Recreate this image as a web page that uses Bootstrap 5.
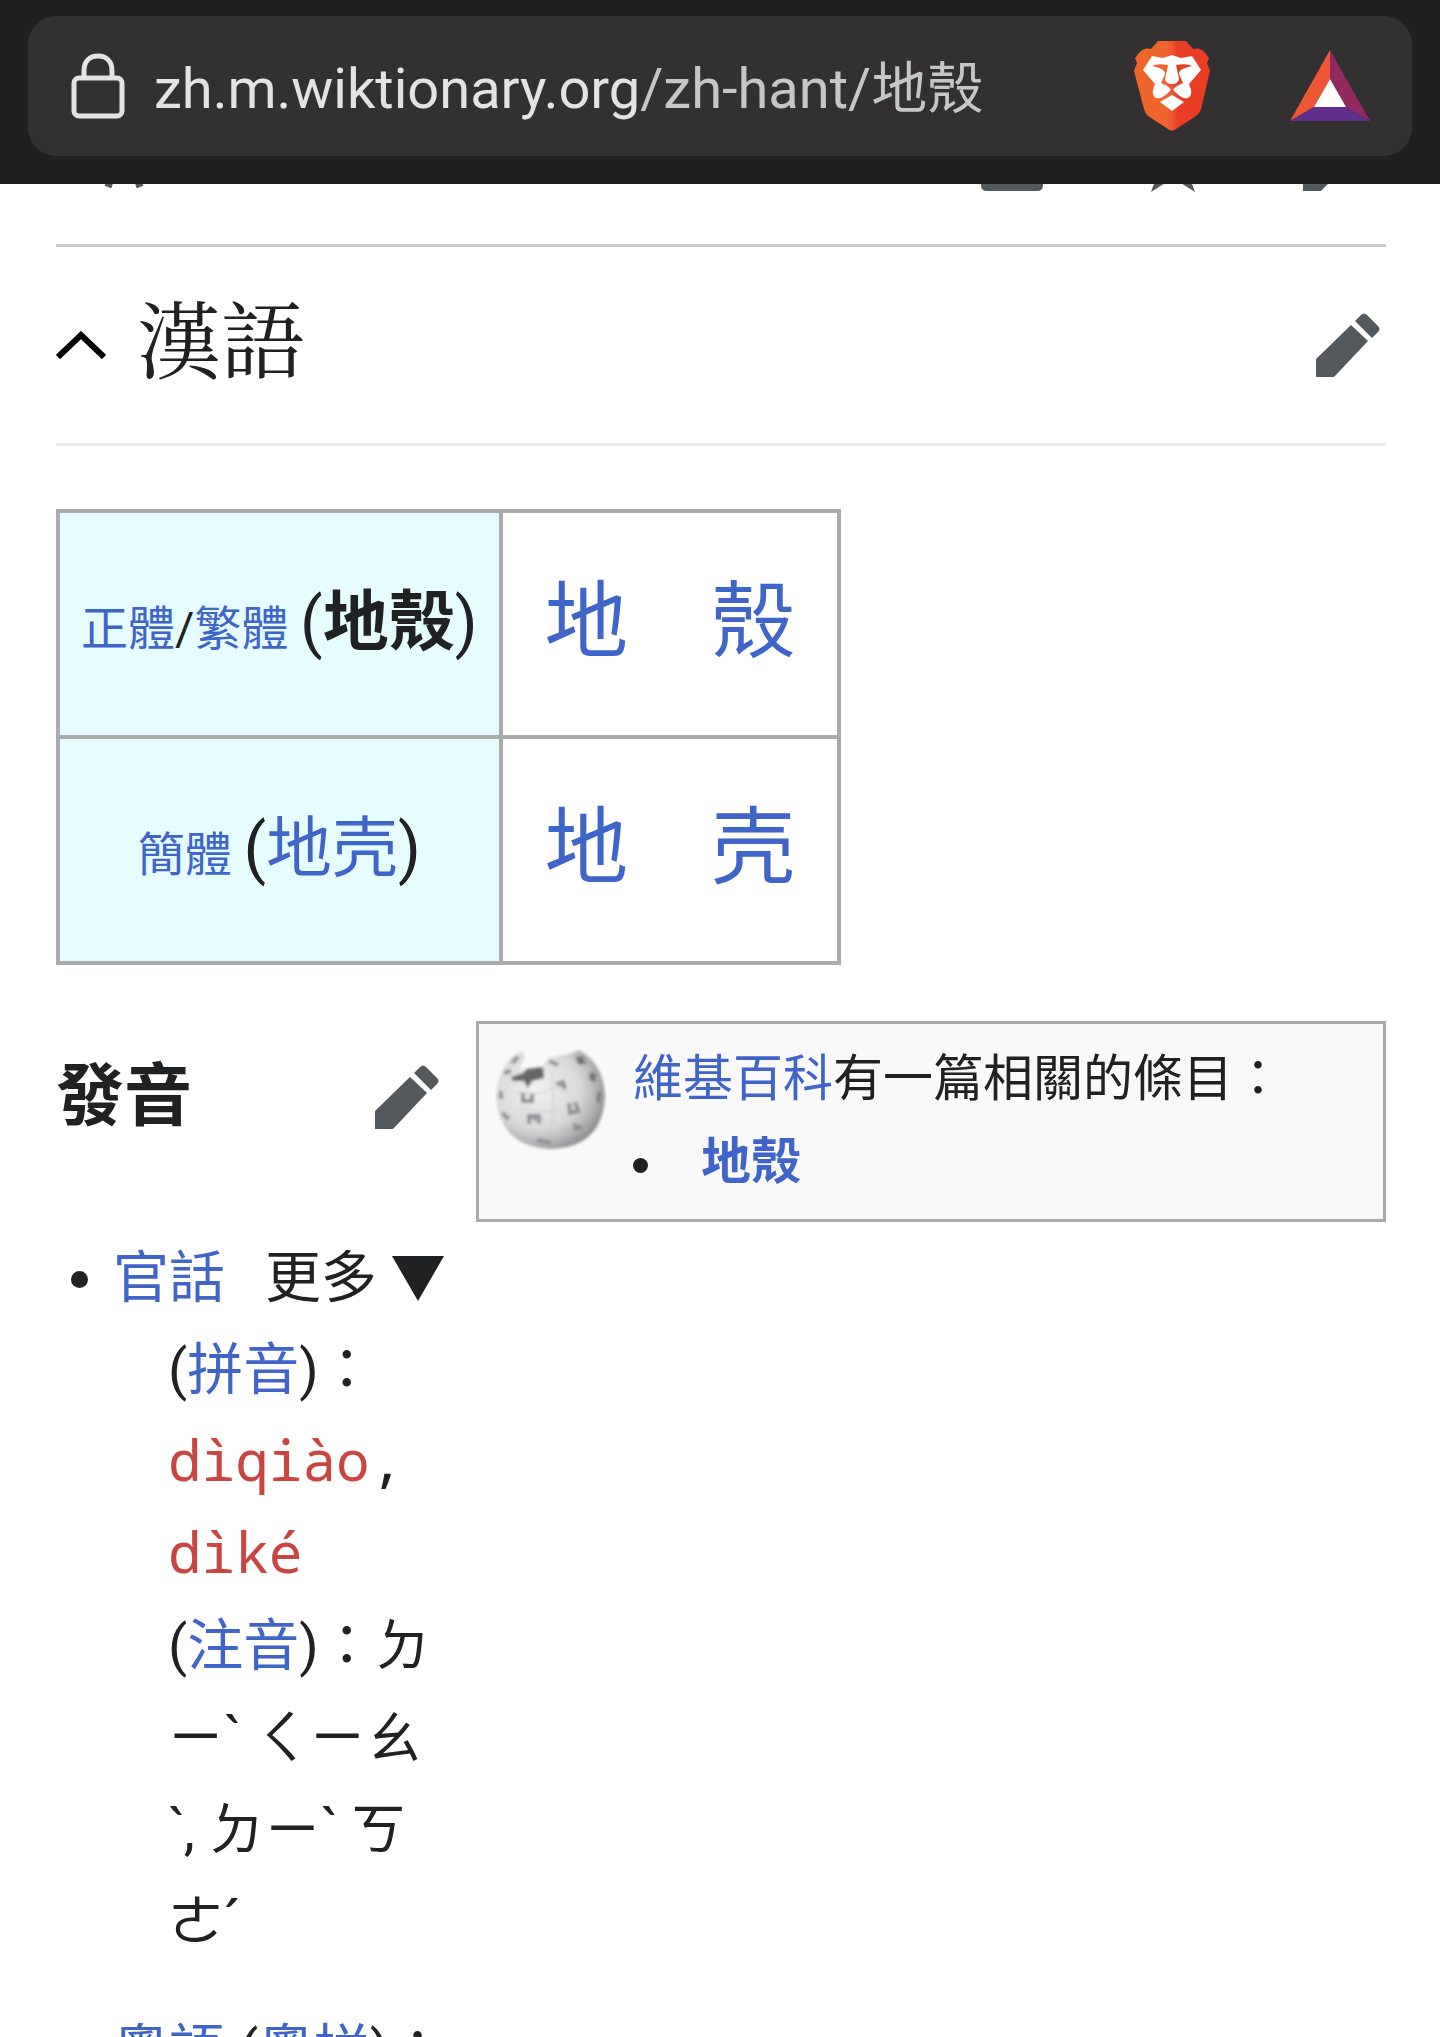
<!DOCTYPE html>
<html lang="zh-Hant">
<head>
<meta charset="utf-8">
<meta name="viewport" content="width=device-width, initial-scale=1">
<title>地殼</title>
<link href="https://cdn.jsdelivr.net/npm/bootstrap@5.3.0/dist/css/bootstrap.min.css" rel="stylesheet">
<style>
  body { font-family: Roboto, "Noto Sans", "Noto Sans CJK TC", sans-serif; font-size: 56px; line-height: 92px; color: #202122; background: #fff; }
  .screen { height: 100vh; }
  a { color: #4065c9; text-decoration: none; }
  .gutter { padding-left: 56px; padding-right: 54px; }
  .browser-bar { background: #202020; padding: 16px 28px 28px; z-index: 2; }
  .omnibox { background: #323031; border-radius: 28px; height: 140px; padding: 0 42px 0 43px; line-height: 64px; color: #c4c7c5; }
  .omnibox .host { color: #e3e3e3; }
  .omnibox .address { padding: 5px 0 0 29px; }
  .omnibox .shields { margin-right: 80px; }
  .plain-btn { background: none; border: 0; padding: 0; display: block; line-height: 0; color: #54595d; }
  .page-tools { height: 64px; margin-top: -56px; padding-left: 83px; padding-right: 73px; color: #54595d; }
  .tool-set { gap: 98px; }
  .rule-strong { border-bottom: 3px solid #c8ccd1; height: 55px; }
  .lang-heading { height: 199px; padding: 0 6px 0 0; border-bottom: 3px solid #eaecf0; }
  .lang-heading h2 { font-family: "Noto Serif CJK TC", "Noto Serif CJK JP", "Noto Serif CJK SC", "Liberation Serif", serif; font-size: 84px; line-height: 120px; font-weight: 400; margin: 0 0 18px 31px; }
  .forms { margin: 63px 0 56px; border-collapse: collapse; border: 4px solid #aaa; }
  .forms th, .forms td { border-top: 4px solid #aaa; border-bottom: 4px solid #aaa; height: 226px; text-align: center; vertical-align: middle; padding: 0; }
  .forms th { background: #e5fdff; border-right: 4px solid #aaa; padding: 4px 21px 0; font-weight: 400; font-size: 66px; line-height: 110px; white-space: nowrap; }
  .forms th .script { font-size: 47px; }
  .forms td { font-size: 84px; line-height: 138px; width: 169px; padding-bottom: 2px; }
  .sound-col { flex: 0 0 420px; white-space: nowrap; }
  .sub-heading { height: 180px; padding: 0 37px 29px 0; }
  .sub-heading h3 { font-size: 68px; line-height: 92px; font-weight: 700; margin: 0; }
  .dots { list-style: none; margin: 0; padding: 0; }
  .dots > li { position: relative; }
  .dots > li::before { content: ""; position: absolute; border-radius: 50%; background: #202122; }
  .readings { margin-top: 31px; padding-left: 57px; }
  .readings > li { margin-bottom: 37px; }
  .readings > li::before { width: 17px; height: 17px; left: -42px; top: 39px; }
  .readings .detail { padding-left: 55px; }
  .more-btn { font: inherit; line-height: inherit; color: inherit; background: none; border: 0; padding: 0; margin-left: 40px; gap: 15px; }
  .pinyin { font-family: "Noto Sans Mono", "DejaVu Sans Mono", monospace; line-height: 1; }
  .pinyin a { color: #cb4540; }
  .sister { flex: 1 1 0; border: 3px solid #aaa; background: #f9f9f9; height: 201px; padding: 14px 16px 10px; font-size: 50px; line-height: 83px; gap: 26px; }
  .sister .dots > li { padding-left: 68px; font-weight: 700; }
  .sister .dots > li::before { width: 15px; height: 15px; left: 0; top: 37px; }
  .globe { margin-top: 11px; }
</style>
</head>
<body>
<div class="screen overflow-hidden">
  <header class="browser-bar position-relative">
    <div class="omnibox d-flex align-items-center">
      <svg width="54" height="66" viewBox="0 0 54 66" class="flex-shrink-0" fill="none" stroke="#e3e3e3" stroke-width="5" aria-hidden="true"><rect x="3" y="25" width="48" height="38" rx="5"/><path d="M13 25V18C13 8 19 3 27 3s14 5 14 15v7"/></svg>
      <div class="address flex-grow-1 text-nowrap"><span class="host">zh.m.wiktionary.org</span>/zh-hant/地殼</div>
      <button class="plain-btn shields" aria-label="Shields">
        <svg width="76" height="90" viewBox="0 0 76 90"><defs><linearGradient id="mane"><stop offset=".42" stop-color="#f0652b"/><stop offset=".5" stop-color="#ef5636"/><stop offset=".57" stop-color="#ea3d26"/></linearGradient></defs>
        <path fill="url(#mane)" d="M24 0H52L59 8Q67 6 71 12L75 17 73 22 76 30 67 68Q66 72 62 75L42 88Q38 91 34 88L14 75Q11 72 10 68L0 30 3 22 1 17 5 12Q10 6 17 8Z"/>
        <path fill="#fff" d="M18 15L29 17 38 14 47 17 58 15 67 29 55 43Q60 54 54 57 49 59 40 50Q38 48 43 45L49 42 45 33Q44 28 58 25 53 22 42 24L45 38Q44 43 38 43T31 38L34 24Q23 22 18 25 32 28 31 33L27 42 33 45Q38 48 36 50 27 59 22 57 16 54 21 43L9 29Z"/>
        <path fill="#fff" d="M38 54L50 61 38 70 26 61Z"/></svg>
      </button>
      <button class="plain-btn" aria-label="Rewards">
        <svg width="80" height="72" viewBox="0 0 80 72"><path fill="#ed5736" d="M40 0V29L24 57 0 71Z"/><path fill="#902a61" d="M40 0L80 71 56 57 40 29Z"/><path fill="#602f8c" d="M0 71L24 57H56L80 71Z"/><path fill="#fff" d="M40 29L56 57H24Z"/></svg>
      </button>
    </div>
  </header>

  <nav class="page-tools d-flex justify-content-between align-items-end" aria-label="頁面工具">
    <button class="plain-btn" aria-label="語言"><svg width="64" height="64" viewBox="0 0 64 64" fill="none" stroke="currentColor" stroke-width="7"><path d="M25 59L41 14 57 59M31 38H51M2 10H38M20 2V10M6 38Q26 28 31 10M10 12Q14 24 24 32"/></svg></button>
    <div class="tool-set d-flex">
      <button class="plain-btn" aria-label="下載"><svg width="64" height="64" viewBox="0 0 64 64" fill="currentColor"><path d="M2 50H64V57Q64 63 58 63H8Q2 63 2 57ZM26 2H38V24H52L32 44 12 24H26Z"/></svg></button>
      <button class="plain-btn" aria-label="監視"><svg width="64" height="64" viewBox="0 0 64 64" fill="currentColor"><path d="M32 0L40 24H64L45 39 54 64 32 50 10 64 19 39 0 24H24Z"/></svg></button>
      <button class="plain-btn" aria-label="編輯"><svg width="64" height="64" viewBox="0 0 64 64" fill="currentColor"><path d="M0 46L35 11 52 28 18 63H0ZM39 8L45 2Q48-1 51 2L62 13Q65 16 62 19L56 25Z"/></svg></button>
    </div>
  </nav>

  <main class="gutter">
    <div class="rule-strong"></div>
    <section>
      <div class="lang-heading d-flex align-items-center">
        <svg width="50" height="28" viewBox="0 0 50 28" fill="none" stroke="#000" stroke-width="6" aria-hidden="true"><path d="M2 26L25 4 48 26"/></svg>
        <h2 class="flex-grow-1">漢語</h2>
        <button class="plain-btn" aria-label="編輯漢語"><svg width="64" height="64" viewBox="0 0 64 64" fill="currentColor"><path d="M0 46L35 12 52 28 18 64H0ZM39 8L45 2Q48-1 51 2L62 13Q65 16 62 19L56 25Z"/></svg></button>
      </div>

      <table class="forms">
        <tr><th scope="row"><span class="script"><a href="#">正體</a>/<a href="#">繁體</a> </span>(<b>地殼</b>)</th><td><a href="#">地</a></td><td><a href="#">殼</a></td></tr>
        <tr><th scope="row"><span class="script"><a href="#">簡體</a> </span>(<a href="#">地壳</a>)</th><td><a href="#">地</a></td><td><a href="#">壳</a></td></tr>
      </table>

      <div class="d-flex align-items-start">
        <div class="sound-col">
          <div class="sub-heading d-flex align-items-center justify-content-between">
            <h3>發音</h3>
            <button class="plain-btn" aria-label="編輯發音"><svg width="64" height="64" viewBox="0 0 64 64" fill="currentColor"><path d="M0 46L35 12 52 28 18 64H0ZM39 8L45 2Q48-1 51 2L62 13Q65 16 62 19L56 25Z"/></svg></button>
          </div>
          <ul class="dots readings">
            <li>
              <div class="d-flex"><a href="#">官話</a><button class="more-btn d-flex align-items-center">更多 <svg width="52" height="45" viewBox="0 0 52 45" fill="currentColor" aria-hidden="true"><path d="M0 0H52L26 45Z"/></svg></button></div>
              <div class="detail">
                (<a href="#">拼音</a>)：<br>
                <span class="pinyin"><a href="#">dìqiào</a>,<br><a href="#">dìké</a></span><br>
                (<a href="#">注音</a>)：ㄉ<br>ㄧˋ ㄑㄧㄠ<br>ˋ, ㄉㄧˋ ㄎ<br>ㄜˊ
              </div>
            </li>
            <li><a href="#">粵語</a> (<a href="#">粵拼</a>)：</li>
          </ul>
        </div>

        <aside class="sister d-flex">
          <svg class="globe flex-shrink-0" width="112" height="102" viewBox="0 0 112 102" role="img" aria-label="維基百科">
            <defs><radialGradient id="ball" cx=".38" cy=".4" r=".66"><stop offset="0" stop-color="#f1f1f1"/><stop offset=".6" stop-color="#d9d9da"/><stop offset=".85" stop-color="#adaeb0"/><stop offset="1" stop-color="#88898c"/></radialGradient>
            <filter id="soft"><feGaussianBlur stdDeviation="1.6"/></filter></defs>
            <g filter="url(#soft)">
              <path fill="url(#ball)" d="M26 2L30 6 25 18 34 25 46 18 54 9 62 7 74 5 84 1Q108 14 110 46 108 98 56 100 4 98 1 46 4 14 26 2Z"/>
              <path fill="#666" d="M16 28L28 24 32 20 48 18 49 29 37 32 33 39 29 32 18 32Z"/>
              <path fill="#737476" d="M80 8L88 7 91 15 84 16ZM95 23L101 25 100 34 94 30ZM103 42L106 44 104 55 101 51Z"/>
              <path fill="none" stroke="#8f9093" stroke-width="4" d="M28 44V52H37V44M34 75V67H44V75M38 70H41M74 54L75 64 83 62M80 53L84 64M78 76L87 79M80 82L83 76M61 34L71 37M67 31L70 40M54 12L63 16M6 42V50M7 64L14 70M9 24L16 22M17 14L23 8M42 91L56 94"/>
              <path fill="none" stroke="#c9cacb" stroke-width="1" d="M22 43Q48 48 58 38L74 44M24 58Q48 66 64 60M32 84Q56 82 76 86M56 22Q60 50 56 86"/>
            </g>
          </svg>
          <div class="flex-grow-1">
            <div><a href="#">維基百科</a>有一篇相關的條目：</div>
            <ul class="dots"><li><a href="#">地殼</a></li></ul>
          </div>
        </aside>
      </div>
    </section>
  </main>
</div>
<script src="https://cdn.jsdelivr.net/npm/bootstrap@5.3.0/dist/js/bootstrap.bundle.min.js"></script>
</body>
</html>
